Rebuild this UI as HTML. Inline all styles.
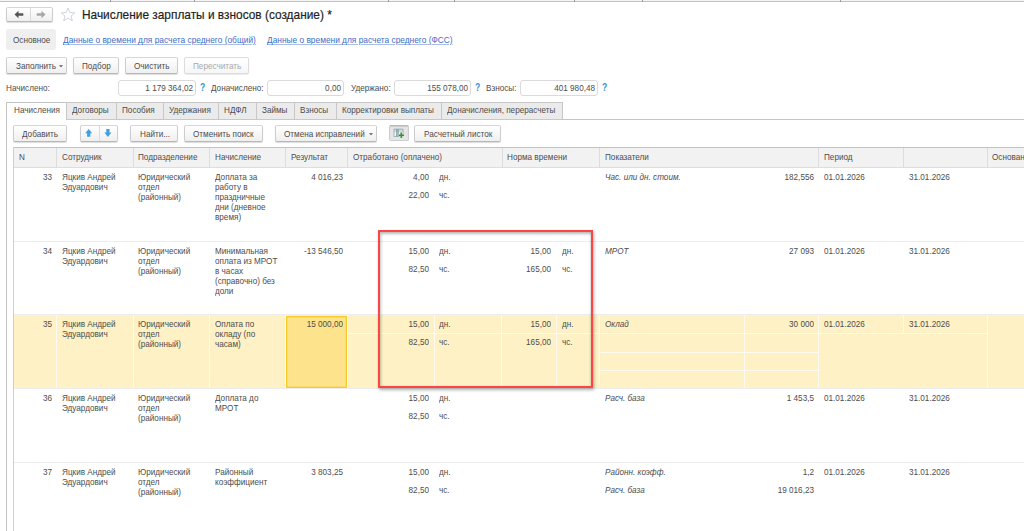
<!DOCTYPE html>
<html><head><meta charset="utf-8"><style>
html,body{margin:0;padding:0;}
body{width:1024px;height:531px;overflow:hidden;background:#fff;position:relative;font-family:"Liberation Sans",sans-serif;}
body>div,body>svg{position:absolute;}
.t{white-space:nowrap;line-height:12px;height:12px;}
</style></head><body>
<div style="left:0px;top:0px;width:1024px;height:1px;background:#f4f4f4"></div>
<div style="left:0px;top:1px;width:1024px;height:1px;background:#c2c2c2"></div>
<div style="left:110px;top:0px;width:1px;height:2px;background:#9a9a9a"></div>
<div style="left:194px;top:0px;width:1px;height:2px;background:#9a9a9a"></div>
<div style="left:388px;top:0px;width:1px;height:2px;background:#9a9a9a"></div>
<div style="left:454px;top:0px;width:1px;height:2px;background:#9a9a9a"></div>
<div style="left:574px;top:0px;width:1px;height:2px;background:#9a9a9a"></div>
<div style="left:642px;top:0px;width:1px;height:2px;background:#9a9a9a"></div>
<div style="left:840px;top:0px;width:1px;height:2px;background:#9a9a9a"></div>
<div style="left:6px;top:7px;width:47px;height:15px;border:1px solid #cdcdcd;border-top-color:#d6d6d6;border-bottom-color:#b8b8b8;border-radius:2px;background:linear-gradient(#ffffff,#efefef);box-shadow:0 1px 1px rgba(0,0,0,.14);box-sizing:border-box"></div>
<div style="left:30px;top:8px;width:1px;height:13px;background:#dadada"></div>
<svg style="left:14px;top:10px" width="10" height="9" viewBox="0 0 10 9"><path d="M0.5 4.5 L4.5 0.8 L4.5 3.3 L9.3 3.3 L9.3 5.7 L4.5 5.7 L4.5 8.2 Z" fill="#555"/></svg>
<svg style="left:36px;top:10px" width="10" height="9" viewBox="0 0 10 9"><path d="M9.5 4.5 L5.5 0.8 L5.5 3.3 L0.7 3.3 L0.7 5.7 L5.5 5.7 L5.5 8.2 Z" fill="#a6a6a6"/></svg>
<svg style="left:60px;top:7px" width="16" height="15" viewBox="0 0 16 15"><path d="M8 1 L9.9 5.6 L14.8 5.9 L11 9 L12.3 13.8 L8 11.1 L3.7 13.8 L5 9 L1.2 5.9 L6.1 5.6 Z" fill="none" stroke="#c9d0d6" stroke-width="0.9" stroke-linejoin="round"/></svg>
<div class="t" style="left:82.00px;top:9.06px;transform-origin:0 50%;transform:scaleX(0.928);font-size:12.8px;color:#1e1e1e;letter-spacing:0px;-webkit-text-stroke:0.2px #1e1e1e">Начисление зарплаты и взносов (создание) *</div>
<div style="left:6px;top:29px;width:50px;height:21px;background:#efefef;border-radius:3px"></div>
<div class="t" style="left:13.00px;top:34.47px;transform-origin:0 50%;transform:scaleX(0.85);font-size:9.6px;color:#4d4d4d;letter-spacing:0px;">Основное</div>
<div class="t" style="left:63.00px;top:34.47px;transform-origin:0 50%;transform:scaleX(0.87);font-size:9.6px;color:#3d6ec9;letter-spacing:0px;text-decoration:underline;text-decoration-color:#a9bde6">Данные о времени для расчета среднего (общий)</div>
<div class="t" style="left:267.00px;top:34.47px;transform-origin:0 50%;transform:scaleX(0.87);font-size:9.6px;color:#3d6ec9;letter-spacing:0px;text-decoration:underline;text-decoration-color:#a9bde6">Данные о времени для расчета среднего (ФСС)</div>
<div style="left:6px;top:57px;width:61px;height:17px;border:1px solid #cdcdcd;border-top-color:#d6d6d6;border-bottom-color:#b8b8b8;border-radius:2px;background:linear-gradient(#ffffff,#efefef);box-shadow:0 1px 1px rgba(0,0,0,.14);box-sizing:border-box"></div>
<div class="t" style="left:16.00px;top:60.17px;transform-origin:0 50%;transform:scaleX(0.85);font-size:9.6px;color:#4d4d4d;letter-spacing:0px;">Заполнить</div>
<svg style="left:59px;top:65.0px" width="4" height="3" viewBox="0 0 4 3"><path d="M0 0.3 L4 0.3 L2 2.3Z" fill="#555"/></svg>
<div style="left:73px;top:57px;width:46px;height:17px;border:1px solid #cdcdcd;border-top-color:#d6d6d6;border-bottom-color:#b8b8b8;border-radius:2px;background:linear-gradient(#ffffff,#efefef);box-shadow:0 1px 1px rgba(0,0,0,.14);box-sizing:border-box"></div>
<div class="t" style="left:82.00px;top:60.17px;transform-origin:0 50%;transform:scaleX(0.85);font-size:9.6px;color:#4d4d4d;letter-spacing:0px;">Подбор</div>
<div style="left:125px;top:57px;width:53px;height:17px;border:1px solid #cdcdcd;border-top-color:#d6d6d6;border-bottom-color:#b8b8b8;border-radius:2px;background:linear-gradient(#ffffff,#efefef);box-shadow:0 1px 1px rgba(0,0,0,.14);box-sizing:border-box"></div>
<div class="t" style="left:134.00px;top:60.17px;transform-origin:0 50%;transform:scaleX(0.85);font-size:9.6px;color:#4d4d4d;letter-spacing:0px;">Очистить</div>
<div style="left:184px;top:57px;width:65px;height:17px;border:1px solid #dcdcdc;border-radius:2px;background:linear-gradient(#ffffff,#f6f6f6);box-shadow:0 1px 1px rgba(0,0,0,.08);box-sizing:border-box"></div>
<div class="t" style="left:192.70px;top:60.17px;transform-origin:0 50%;transform:scaleX(0.85);font-size:9.6px;color:#a9a9a9;letter-spacing:0px;">Пересчитать</div>
<div class="t" style="left:6.00px;top:81.97px;transform-origin:0 50%;transform:scaleX(0.85);font-size:9.6px;color:#4d4d4d;letter-spacing:0px;">Начислено:</div>
<div style="left:118px;top:80px;width:78px;height:16px;border:1px solid #dadada;border-radius:3px;background:#fff;box-sizing:border-box"></div>
<div class="t" style="left:-7.00px;top:81.97px;width:200px;text-align:right;transform-origin:100% 50%;transform:scaleX(0.85);font-size:9.6px;color:#4d4d4d;letter-spacing:0px;">1 179 364,02</div>
<div class="t" style="left:199.50px;top:81.83px;transform-origin:0 50%;transform:scaleX(0.85);font-size:10px;color:#3990d6;letter-spacing:0px;font-weight:bold">?</div>
<div class="t" style="left:211.00px;top:81.97px;transform-origin:0 50%;transform:scaleX(0.85);font-size:9.6px;color:#4d4d4d;letter-spacing:0px;">Доначислено:</div>
<div style="left:267px;top:80px;width:77px;height:16px;border:1px solid #dadada;border-radius:3px;background:#fff;box-sizing:border-box"></div>
<div class="t" style="left:141.20px;top:81.97px;width:200px;text-align:right;transform-origin:100% 50%;transform:scaleX(0.85);font-size:9.6px;color:#4d4d4d;letter-spacing:0px;">0,00</div>
<div class="t" style="left:350.50px;top:81.97px;transform-origin:0 50%;transform:scaleX(0.85);font-size:9.6px;color:#4d4d4d;letter-spacing:0px;">Удержано:</div>
<div style="left:394px;top:80px;width:77px;height:16px;border:1px solid #dadada;border-radius:3px;background:#fff;box-sizing:border-box"></div>
<div class="t" style="left:268.20px;top:81.97px;width:200px;text-align:right;transform-origin:100% 50%;transform:scaleX(0.85);font-size:9.6px;color:#4d4d4d;letter-spacing:0px;">155 078,00</div>
<div class="t" style="left:475.40px;top:81.83px;transform-origin:0 50%;transform:scaleX(0.85);font-size:10px;color:#3990d6;letter-spacing:0px;font-weight:bold">?</div>
<div class="t" style="left:486.30px;top:81.97px;transform-origin:0 50%;transform:scaleX(0.85);font-size:9.6px;color:#4d4d4d;letter-spacing:0px;">Взносы:</div>
<div style="left:520px;top:80px;width:78px;height:16px;border:1px solid #dadada;border-radius:3px;background:#fff;box-sizing:border-box"></div>
<div class="t" style="left:395.20px;top:81.97px;width:200px;text-align:right;transform-origin:100% 50%;transform:scaleX(0.85);font-size:9.6px;color:#4d4d4d;letter-spacing:0px;">401 980,48</div>
<div class="t" style="left:601.70px;top:81.83px;transform-origin:0 50%;transform:scaleX(0.85);font-size:10px;color:#3990d6;letter-spacing:0px;font-weight:bold">?</div>
<div style="left:6px;top:119px;width:1018px;height:1px;background:#c4c4c4"></div>
<div style="left:6px;top:102px;width:61px;height:18px;background:#fff;border:1px solid #c4c4c4;border-bottom:none;box-sizing:border-box"></div>
<div class="t" style="left:13.50px;top:104.17px;transform-origin:0 50%;transform:scaleX(0.85);font-size:9.6px;color:#4d4d4d;letter-spacing:0px;">Начисления</div>
<div style="left:66px;top:102px;width:51px;height:18px;background:#ebebeb;border:1px solid #c8c8c8;box-sizing:border-box"></div>
<div class="t" style="left:72.00px;top:104.17px;transform-origin:0 50%;transform:scaleX(0.85);font-size:9.6px;color:#4d4d4d;letter-spacing:0px;">Договоры</div>
<div style="left:116px;top:102px;width:48px;height:18px;background:#ebebeb;border:1px solid #c8c8c8;box-sizing:border-box"></div>
<div class="t" style="left:122.00px;top:104.17px;transform-origin:0 50%;transform:scaleX(0.85);font-size:9.6px;color:#4d4d4d;letter-spacing:0px;">Пособия</div>
<div style="left:163px;top:102px;width:56px;height:18px;background:#ebebeb;border:1px solid #c8c8c8;box-sizing:border-box"></div>
<div class="t" style="left:169.00px;top:104.17px;transform-origin:0 50%;transform:scaleX(0.85);font-size:9.6px;color:#4d4d4d;letter-spacing:0px;">Удержания</div>
<div style="left:218px;top:102px;width:39px;height:18px;background:#ebebeb;border:1px solid #c8c8c8;box-sizing:border-box"></div>
<div class="t" style="left:224.00px;top:104.17px;transform-origin:0 50%;transform:scaleX(0.85);font-size:9.6px;color:#4d4d4d;letter-spacing:0px;">НДФЛ</div>
<div style="left:256px;top:102px;width:39px;height:18px;background:#ebebeb;border:1px solid #c8c8c8;box-sizing:border-box"></div>
<div class="t" style="left:262.00px;top:104.17px;transform-origin:0 50%;transform:scaleX(0.85);font-size:9.6px;color:#4d4d4d;letter-spacing:0px;">Займы</div>
<div style="left:294px;top:102px;width:43px;height:18px;background:#ebebeb;border:1px solid #c8c8c8;box-sizing:border-box"></div>
<div class="t" style="left:300.00px;top:104.17px;transform-origin:0 50%;transform:scaleX(0.85);font-size:9.6px;color:#4d4d4d;letter-spacing:0px;">Взносы</div>
<div style="left:336px;top:102px;width:106px;height:18px;background:#ebebeb;border:1px solid #c8c8c8;box-sizing:border-box"></div>
<div class="t" style="left:342.00px;top:104.17px;transform-origin:0 50%;transform:scaleX(0.85);font-size:9.6px;color:#4d4d4d;letter-spacing:0px;">Корректировки выплаты</div>
<div style="left:441px;top:102px;width:122px;height:18px;background:#ebebeb;border:1px solid #c8c8c8;box-sizing:border-box"></div>
<div class="t" style="left:447.00px;top:104.17px;transform-origin:0 50%;transform:scaleX(0.85);font-size:9.6px;color:#4d4d4d;letter-spacing:0px;">Доначисления, перерасчеты</div>
<div style="left:6px;top:119px;width:1px;height:412px;background:#c4c4c4"></div>
<div style="left:13px;top:125px;width:54px;height:17px;border:1px solid #cdcdcd;border-top-color:#d6d6d6;border-bottom-color:#b8b8b8;border-radius:2px;background:linear-gradient(#ffffff,#efefef);box-shadow:0 1px 1px rgba(0,0,0,.14);box-sizing:border-box"></div>
<div class="t" style="left:22.00px;top:128.17px;transform-origin:0 50%;transform:scaleX(0.85);font-size:9.6px;color:#4d4d4d;letter-spacing:0px;">Добавить</div>
<div style="left:80px;top:125px;width:38px;height:17px;border:1px solid #cdcdcd;border-top-color:#d6d6d6;border-bottom-color:#b8b8b8;border-radius:2px;background:linear-gradient(#ffffff,#efefef);box-shadow:0 1px 1px rgba(0,0,0,.14);box-sizing:border-box"></div>
<div style="left:99px;top:126px;width:1px;height:15px;background:#dadada"></div>
<svg style="left:85px;top:129px" width="8" height="8" viewBox="0 0 8 8"><path d="M3.7 0.1 L7.2 4.3 L5.3 4.3 L5.3 7.7 L2.1 7.7 L2.1 4.3 L0.2 4.3 Z" fill="#3fa0e4"/></svg>
<svg style="left:103.5px;top:129px" width="8" height="8" viewBox="0 0 8 8"><path d="M3.9 7.9 L7.4 3.6 L5.5 3.6 L5.5 0.1 L2.3 0.1 L2.3 3.6 L0.4 3.6 Z" fill="#3fa0e4"/></svg>
<div style="left:130px;top:125px;width:48px;height:17px;border:1px solid #cdcdcd;border-top-color:#d6d6d6;border-bottom-color:#b8b8b8;border-radius:2px;background:linear-gradient(#ffffff,#efefef);box-shadow:0 1px 1px rgba(0,0,0,.14);box-sizing:border-box"></div>
<div class="t" style="left:140.00px;top:128.17px;transform-origin:0 50%;transform:scaleX(0.85);font-size:9.6px;color:#4d4d4d;letter-spacing:0px;">Найти...</div>
<div style="left:184px;top:125px;width:79px;height:17px;border:1px solid #cdcdcd;border-top-color:#d6d6d6;border-bottom-color:#b8b8b8;border-radius:2px;background:linear-gradient(#ffffff,#efefef);box-shadow:0 1px 1px rgba(0,0,0,.14);box-sizing:border-box"></div>
<div class="t" style="left:193.00px;top:128.17px;transform-origin:0 50%;transform:scaleX(0.85);font-size:9.6px;color:#4d4d4d;letter-spacing:0px;">Отменить поиск</div>
<div style="left:275px;top:125px;width:102px;height:17px;border:1px solid #cdcdcd;border-top-color:#d6d6d6;border-bottom-color:#b8b8b8;border-radius:2px;background:linear-gradient(#ffffff,#efefef);box-shadow:0 1px 1px rgba(0,0,0,.14);box-sizing:border-box"></div>
<div class="t" style="left:284.00px;top:128.17px;transform-origin:0 50%;transform:scaleX(0.85);font-size:9.6px;color:#4d4d4d;letter-spacing:0px;">Отмена исправлений</div>
<svg style="left:369px;top:133.0px" width="4" height="3" viewBox="0 0 4 3"><path d="M0 0.3 L4 0.3 L2 2.3Z" fill="#555"/></svg>
<div style="left:389px;top:125px;width:20px;height:16px;border:1px solid #cdcdcd;border-top-color:#b9b9b9;border-radius:2px;background:#e6e6e6;box-shadow:inset 0 1px 1px rgba(0,0,0,.12);box-sizing:border-box"></div>
<svg style="left:393px;top:128px" width="13" height="12" viewBox="0 0 13 12"><rect x="0.6" y="0.7" width="9.8" height="8.3" fill="#8ea4b8"/><rect x="1.4" y="1.7" width="1.6" height="0.9" fill="#fff"/><rect x="3.7" y="1.7" width="1.5" height="0.9" fill="#8fd36a"/><rect x="5.9" y="1.7" width="3.8" height="0.9" fill="#fff"/><rect x="1.4" y="3.4" width="1.6" height="4.9" fill="#f4f7fa"/><rect x="3.7" y="3.4" width="1.5" height="4.9" fill="#8fd36a"/><rect x="5.9" y="3.4" width="3.8" height="4.9" fill="#f4f7fa"/><path d="M8.3 4.3 V10.3 M5.3 7.3 H11.3" stroke="#e6e6e6" stroke-width="2.6"/><path d="M8.3 4.6 V10 M5.6 7.3 H11" stroke="#2b962b" stroke-width="1.6"/></svg>
<div style="left:414px;top:125px;width:87px;height:17px;border:1px solid #cdcdcd;border-top-color:#d6d6d6;border-bottom-color:#b8b8b8;border-radius:2px;background:linear-gradient(#ffffff,#efefef);box-shadow:0 1px 1px rgba(0,0,0,.14);box-sizing:border-box"></div>
<div class="t" style="left:423.50px;top:128.17px;transform-origin:0 50%;transform:scaleX(0.85);font-size:9.6px;color:#4d4d4d;letter-spacing:0px;">Расчетный листок</div>
<div style="left:13px;top:147px;width:1011px;height:21px;background:#f2f2f2;border-top:1px solid #c2c2c2;border-bottom:1px solid #dedede;box-sizing:border-box"></div>
<div style="left:13px;top:147px;width:1px;height:384px;background:#cfcfcf"></div>
<div style="left:56px;top:148px;width:1px;height:19px;background:#dcdcdc"></div>
<div style="left:133px;top:148px;width:1px;height:19px;background:#dcdcdc"></div>
<div style="left:209px;top:148px;width:1px;height:19px;background:#dcdcdc"></div>
<div style="left:285px;top:148px;width:1px;height:19px;background:#dcdcdc"></div>
<div style="left:347px;top:148px;width:1px;height:19px;background:#dcdcdc"></div>
<div style="left:502px;top:148px;width:1px;height:19px;background:#dcdcdc"></div>
<div style="left:599px;top:148px;width:1px;height:19px;background:#dcdcdc"></div>
<div style="left:818px;top:148px;width:1px;height:19px;background:#dcdcdc"></div>
<div style="left:903px;top:148px;width:1px;height:19px;background:#dcdcdc"></div>
<div style="left:987px;top:148px;width:1px;height:19px;background:#dcdcdc"></div>
<div class="t" style="left:18.50px;top:150.97px;transform-origin:0 50%;transform:scaleX(0.85);font-size:9.6px;color:#4d4d4d;letter-spacing:0px;">N</div>
<div class="t" style="left:61.50px;top:150.97px;transform-origin:0 50%;transform:scaleX(0.85);font-size:9.6px;color:#4d4d4d;letter-spacing:0px;">Сотрудник</div>
<div class="t" style="left:138.00px;top:150.97px;transform-origin:0 50%;transform:scaleX(0.85);font-size:9.6px;color:#4d4d4d;letter-spacing:0px;">Подразделение</div>
<div class="t" style="left:214.50px;top:150.97px;transform-origin:0 50%;transform:scaleX(0.85);font-size:9.6px;color:#4d4d4d;letter-spacing:0px;">Начисление</div>
<div class="t" style="left:291.00px;top:150.97px;transform-origin:0 50%;transform:scaleX(0.85);font-size:9.6px;color:#4d4d4d;letter-spacing:0px;">Результат</div>
<div class="t" style="left:352.50px;top:150.97px;transform-origin:0 50%;transform:scaleX(0.85);font-size:9.6px;color:#4d4d4d;letter-spacing:0px;">Отработано (оплачено)</div>
<div class="t" style="left:507.00px;top:150.97px;transform-origin:0 50%;transform:scaleX(0.85);font-size:9.6px;color:#4d4d4d;letter-spacing:0px;">Норма времени</div>
<div class="t" style="left:604.50px;top:150.97px;transform-origin:0 50%;transform:scaleX(0.85);font-size:9.6px;color:#4d4d4d;letter-spacing:0px;">Показатели</div>
<div class="t" style="left:823.50px;top:150.97px;transform-origin:0 50%;transform:scaleX(0.85);font-size:9.6px;color:#4d4d4d;letter-spacing:0px;">Период</div>
<div class="t" style="left:992.00px;top:150.97px;transform-origin:0 50%;transform:scaleX(0.85);font-size:9.6px;color:#4d4d4d;letter-spacing:0px;">Основание</div>
<div style="left:14px;top:315px;width:1010px;height:73px;background:#fdf1c5"></div>
<div style="left:56px;top:315px;width:1px;height:73px;background:#fffaf0"></div>
<div style="left:133px;top:315px;width:1px;height:73px;background:#fffaf0"></div>
<div style="left:209px;top:315px;width:1px;height:73px;background:#fffaf0"></div>
<div style="left:285px;top:315px;width:1px;height:73px;background:#fffaf0"></div>
<div style="left:347px;top:315px;width:1px;height:73px;background:#fffaf0"></div>
<div style="left:434px;top:315px;width:1px;height:73px;background:#fffaf0"></div>
<div style="left:501px;top:315px;width:1px;height:73px;background:#fffaf0"></div>
<div style="left:556px;top:315px;width:1px;height:73px;background:#fffaf0"></div>
<div style="left:599px;top:315px;width:1px;height:73px;background:#fffaf0"></div>
<div style="left:744px;top:315px;width:1px;height:73px;background:#fffaf0"></div>
<div style="left:818px;top:315px;width:1px;height:73px;background:#fffaf0"></div>
<div style="left:987px;top:315px;width:1px;height:73px;background:#fffaf0"></div>
<div style="left:903px;top:315px;width:1px;height:18px;background:#fffaf0"></div>
<div style="left:347px;top:333px;width:640px;height:1px;background:#fffaf0"></div>
<div style="left:599px;top:352px;width:219px;height:1px;background:#fffaf0"></div>
<div style="left:599px;top:370px;width:219px;height:1px;background:#fffaf0"></div>
<div style="left:286px;top:316px;width:61px;height:72px;background:#fde38b;border:1px solid #f6ca28;box-shadow:inset 0 0 0 1px #fbdb6c;box-sizing:border-box"></div>
<div style="left:14px;top:241px;width:1010px;height:1px;background:#ededed"></div>
<div style="left:14px;top:314px;width:1010px;height:1px;background:#ededed"></div>
<div style="left:14px;top:388px;width:1010px;height:1px;background:#ededed"></div>
<div style="left:14px;top:462px;width:1010px;height:1px;background:#ededed"></div>
<div class="t" style="left:11.50px;top:171.17px;width:40px;text-align:right;transform-origin:100% 50%;transform:scaleX(0.85);font-size:9.6px;color:#4d4d4d;letter-spacing:0px;">33</div>
<div class="t" style="left:61.50px;top:171.17px;transform-origin:0 50%;transform:scaleX(0.85);font-size:9.6px;color:#4d4d4d;letter-spacing:0px;">Яцкив Андрей</div>
<div class="t" style="left:61.50px;top:181.17px;transform-origin:0 50%;transform:scaleX(0.85);font-size:9.6px;color:#4d4d4d;letter-spacing:0px;">Эдуардович</div>
<div class="t" style="left:138.00px;top:171.17px;transform-origin:0 50%;transform:scaleX(0.85);font-size:9.6px;color:#4d4d4d;letter-spacing:0px;">Юридический</div>
<div class="t" style="left:138.00px;top:181.17px;transform-origin:0 50%;transform:scaleX(0.85);font-size:9.6px;color:#4d4d4d;letter-spacing:0px;">отдел</div>
<div class="t" style="left:138.00px;top:191.17px;transform-origin:0 50%;transform:scaleX(0.85);font-size:9.6px;color:#4d4d4d;letter-spacing:0px;">(районный)</div>
<div class="t" style="left:214.50px;top:171.17px;transform-origin:0 50%;transform:scaleX(0.85);font-size:9.6px;color:#4d4d4d;letter-spacing:0px;">Доплата за</div>
<div class="t" style="left:214.50px;top:181.17px;transform-origin:0 50%;transform:scaleX(0.85);font-size:9.6px;color:#4d4d4d;letter-spacing:0px;">работу в</div>
<div class="t" style="left:214.50px;top:191.17px;transform-origin:0 50%;transform:scaleX(0.85);font-size:9.6px;color:#4d4d4d;letter-spacing:0px;">праздничные</div>
<div class="t" style="left:214.50px;top:201.17px;transform-origin:0 50%;transform:scaleX(0.85);font-size:9.6px;color:#4d4d4d;letter-spacing:0px;">дни (дневное</div>
<div class="t" style="left:214.50px;top:211.17px;transform-origin:0 50%;transform:scaleX(0.85);font-size:9.6px;color:#4d4d4d;letter-spacing:0px;">время)</div>
<div class="t" style="left:282.50px;top:171.17px;width:60px;text-align:right;transform-origin:100% 50%;transform:scaleX(0.85);font-size:9.6px;color:#4d4d4d;letter-spacing:0px;">4 016,23</div>
<div class="t" style="left:369.00px;top:171.17px;width:60px;text-align:right;transform-origin:100% 50%;transform:scaleX(0.85);font-size:9.6px;color:#4d4d4d;letter-spacing:0px;">4,00</div>
<div class="t" style="left:439.00px;top:171.17px;transform-origin:0 50%;transform:scaleX(0.85);font-size:9.6px;color:#4d4d4d;letter-spacing:0px;">дн.</div>
<div class="t" style="left:369.00px;top:189.17px;width:60px;text-align:right;transform-origin:100% 50%;transform:scaleX(0.85);font-size:9.6px;color:#4d4d4d;letter-spacing:0px;">22,00</div>
<div class="t" style="left:439.00px;top:189.17px;transform-origin:0 50%;transform:scaleX(0.85);font-size:9.6px;color:#4d4d4d;letter-spacing:0px;">чс.</div>
<div class="t" style="left:605.00px;top:171.17px;transform-origin:0 50%;transform:scaleX(0.85);font-size:9.6px;color:#4d4d4d;letter-spacing:0px;font-style:italic">Час. или дн. стоим.</div>
<div class="t" style="left:753.50px;top:171.17px;width:60px;text-align:right;transform-origin:100% 50%;transform:scaleX(0.85);font-size:9.6px;color:#4d4d4d;letter-spacing:0px;">182,556</div>
<div class="t" style="left:824.00px;top:171.17px;transform-origin:0 50%;transform:scaleX(0.85);font-size:9.6px;color:#4d4d4d;letter-spacing:0px;">01.01.2026</div>
<div class="t" style="left:909.00px;top:171.17px;transform-origin:0 50%;transform:scaleX(0.85);font-size:9.6px;color:#4d4d4d;letter-spacing:0px;">31.01.2026</div>
<div class="t" style="left:11.50px;top:245.17px;width:40px;text-align:right;transform-origin:100% 50%;transform:scaleX(0.85);font-size:9.6px;color:#4d4d4d;letter-spacing:0px;">34</div>
<div class="t" style="left:61.50px;top:245.17px;transform-origin:0 50%;transform:scaleX(0.85);font-size:9.6px;color:#4d4d4d;letter-spacing:0px;">Яцкив Андрей</div>
<div class="t" style="left:61.50px;top:255.17px;transform-origin:0 50%;transform:scaleX(0.85);font-size:9.6px;color:#4d4d4d;letter-spacing:0px;">Эдуардович</div>
<div class="t" style="left:138.00px;top:245.17px;transform-origin:0 50%;transform:scaleX(0.85);font-size:9.6px;color:#4d4d4d;letter-spacing:0px;">Юридический</div>
<div class="t" style="left:138.00px;top:255.17px;transform-origin:0 50%;transform:scaleX(0.85);font-size:9.6px;color:#4d4d4d;letter-spacing:0px;">отдел</div>
<div class="t" style="left:138.00px;top:265.17px;transform-origin:0 50%;transform:scaleX(0.85);font-size:9.6px;color:#4d4d4d;letter-spacing:0px;">(районный)</div>
<div class="t" style="left:214.50px;top:245.17px;transform-origin:0 50%;transform:scaleX(0.85);font-size:9.6px;color:#4d4d4d;letter-spacing:0px;">Минимальная</div>
<div class="t" style="left:214.50px;top:255.17px;transform-origin:0 50%;transform:scaleX(0.85);font-size:9.6px;color:#4d4d4d;letter-spacing:0px;">оплата из МРОТ</div>
<div class="t" style="left:214.50px;top:265.17px;transform-origin:0 50%;transform:scaleX(0.85);font-size:9.6px;color:#4d4d4d;letter-spacing:0px;">в часах</div>
<div class="t" style="left:214.50px;top:275.17px;transform-origin:0 50%;transform:scaleX(0.85);font-size:9.6px;color:#4d4d4d;letter-spacing:0px;">(справочно) без</div>
<div class="t" style="left:214.50px;top:285.17px;transform-origin:0 50%;transform:scaleX(0.85);font-size:9.6px;color:#4d4d4d;letter-spacing:0px;">доли</div>
<div class="t" style="left:282.50px;top:245.17px;width:60px;text-align:right;transform-origin:100% 50%;transform:scaleX(0.85);font-size:9.6px;color:#4d4d4d;letter-spacing:0px;">-13 546,50</div>
<div class="t" style="left:369.00px;top:245.17px;width:60px;text-align:right;transform-origin:100% 50%;transform:scaleX(0.85);font-size:9.6px;color:#4d4d4d;letter-spacing:0px;">15,00</div>
<div class="t" style="left:439.00px;top:245.17px;transform-origin:0 50%;transform:scaleX(0.85);font-size:9.6px;color:#4d4d4d;letter-spacing:0px;">дн.</div>
<div class="t" style="left:369.00px;top:263.17px;width:60px;text-align:right;transform-origin:100% 50%;transform:scaleX(0.85);font-size:9.6px;color:#4d4d4d;letter-spacing:0px;">82,50</div>
<div class="t" style="left:439.00px;top:263.17px;transform-origin:0 50%;transform:scaleX(0.85);font-size:9.6px;color:#4d4d4d;letter-spacing:0px;">чс.</div>
<div class="t" style="left:501.00px;top:245.17px;width:50px;text-align:right;transform-origin:100% 50%;transform:scaleX(0.85);font-size:9.6px;color:#4d4d4d;letter-spacing:0px;">15,00</div>
<div class="t" style="left:561.50px;top:245.17px;transform-origin:0 50%;transform:scaleX(0.85);font-size:9.6px;color:#4d4d4d;letter-spacing:0px;">дн.</div>
<div class="t" style="left:501.00px;top:263.17px;width:50px;text-align:right;transform-origin:100% 50%;transform:scaleX(0.85);font-size:9.6px;color:#4d4d4d;letter-spacing:0px;">165,00</div>
<div class="t" style="left:561.50px;top:263.17px;transform-origin:0 50%;transform:scaleX(0.85);font-size:9.6px;color:#4d4d4d;letter-spacing:0px;">чс.</div>
<div class="t" style="left:605.00px;top:245.17px;transform-origin:0 50%;transform:scaleX(0.85);font-size:9.6px;color:#4d4d4d;letter-spacing:0px;font-style:italic">МРОТ</div>
<div class="t" style="left:753.50px;top:245.17px;width:60px;text-align:right;transform-origin:100% 50%;transform:scaleX(0.85);font-size:9.6px;color:#4d4d4d;letter-spacing:0px;">27 093</div>
<div class="t" style="left:824.00px;top:245.17px;transform-origin:0 50%;transform:scaleX(0.85);font-size:9.6px;color:#4d4d4d;letter-spacing:0px;">01.01.2026</div>
<div class="t" style="left:909.00px;top:245.17px;transform-origin:0 50%;transform:scaleX(0.85);font-size:9.6px;color:#4d4d4d;letter-spacing:0px;">31.01.2026</div>
<div class="t" style="left:11.50px;top:318.37px;width:40px;text-align:right;transform-origin:100% 50%;transform:scaleX(0.85);font-size:9.6px;color:#4d4d4d;letter-spacing:0px;">35</div>
<div class="t" style="left:61.50px;top:318.37px;transform-origin:0 50%;transform:scaleX(0.85);font-size:9.6px;color:#4d4d4d;letter-spacing:0px;">Яцкив Андрей</div>
<div class="t" style="left:61.50px;top:328.37px;transform-origin:0 50%;transform:scaleX(0.85);font-size:9.6px;color:#4d4d4d;letter-spacing:0px;">Эдуардович</div>
<div class="t" style="left:138.00px;top:318.37px;transform-origin:0 50%;transform:scaleX(0.85);font-size:9.6px;color:#4d4d4d;letter-spacing:0px;">Юридический</div>
<div class="t" style="left:138.00px;top:328.37px;transform-origin:0 50%;transform:scaleX(0.85);font-size:9.6px;color:#4d4d4d;letter-spacing:0px;">отдел</div>
<div class="t" style="left:138.00px;top:338.37px;transform-origin:0 50%;transform:scaleX(0.85);font-size:9.6px;color:#4d4d4d;letter-spacing:0px;">(районный)</div>
<div class="t" style="left:214.50px;top:318.37px;transform-origin:0 50%;transform:scaleX(0.85);font-size:9.6px;color:#4d4d4d;letter-spacing:0px;">Оплата по</div>
<div class="t" style="left:214.50px;top:328.37px;transform-origin:0 50%;transform:scaleX(0.85);font-size:9.6px;color:#4d4d4d;letter-spacing:0px;">окладу (по</div>
<div class="t" style="left:214.50px;top:338.37px;transform-origin:0 50%;transform:scaleX(0.85);font-size:9.6px;color:#4d4d4d;letter-spacing:0px;">часам)</div>
<div class="t" style="left:282.50px;top:318.37px;width:60px;text-align:right;transform-origin:100% 50%;transform:scaleX(0.85);font-size:9.6px;color:#4d4d4d;letter-spacing:0px;">15 000,00</div>
<div class="t" style="left:369.00px;top:318.37px;width:60px;text-align:right;transform-origin:100% 50%;transform:scaleX(0.85);font-size:9.6px;color:#4d4d4d;letter-spacing:0px;">15,00</div>
<div class="t" style="left:439.00px;top:318.37px;transform-origin:0 50%;transform:scaleX(0.85);font-size:9.6px;color:#4d4d4d;letter-spacing:0px;">дн.</div>
<div class="t" style="left:369.00px;top:336.37px;width:60px;text-align:right;transform-origin:100% 50%;transform:scaleX(0.85);font-size:9.6px;color:#4d4d4d;letter-spacing:0px;">82,50</div>
<div class="t" style="left:439.00px;top:336.37px;transform-origin:0 50%;transform:scaleX(0.85);font-size:9.6px;color:#4d4d4d;letter-spacing:0px;">чс.</div>
<div class="t" style="left:501.00px;top:318.37px;width:50px;text-align:right;transform-origin:100% 50%;transform:scaleX(0.85);font-size:9.6px;color:#4d4d4d;letter-spacing:0px;">15,00</div>
<div class="t" style="left:561.50px;top:318.37px;transform-origin:0 50%;transform:scaleX(0.85);font-size:9.6px;color:#4d4d4d;letter-spacing:0px;">дн.</div>
<div class="t" style="left:501.00px;top:336.37px;width:50px;text-align:right;transform-origin:100% 50%;transform:scaleX(0.85);font-size:9.6px;color:#4d4d4d;letter-spacing:0px;">165,00</div>
<div class="t" style="left:561.50px;top:336.37px;transform-origin:0 50%;transform:scaleX(0.85);font-size:9.6px;color:#4d4d4d;letter-spacing:0px;">чс.</div>
<div class="t" style="left:605.00px;top:318.37px;transform-origin:0 50%;transform:scaleX(0.85);font-size:9.6px;color:#4d4d4d;letter-spacing:0px;font-style:italic">Оклад</div>
<div class="t" style="left:753.50px;top:318.37px;width:60px;text-align:right;transform-origin:100% 50%;transform:scaleX(0.85);font-size:9.6px;color:#4d4d4d;letter-spacing:0px;">30 000</div>
<div class="t" style="left:824.00px;top:318.37px;transform-origin:0 50%;transform:scaleX(0.85);font-size:9.6px;color:#4d4d4d;letter-spacing:0px;">01.01.2026</div>
<div class="t" style="left:909.00px;top:318.37px;transform-origin:0 50%;transform:scaleX(0.85);font-size:9.6px;color:#4d4d4d;letter-spacing:0px;">31.01.2026</div>
<div class="t" style="left:11.50px;top:392.17px;width:40px;text-align:right;transform-origin:100% 50%;transform:scaleX(0.85);font-size:9.6px;color:#4d4d4d;letter-spacing:0px;">36</div>
<div class="t" style="left:61.50px;top:392.17px;transform-origin:0 50%;transform:scaleX(0.85);font-size:9.6px;color:#4d4d4d;letter-spacing:0px;">Яцкив Андрей</div>
<div class="t" style="left:61.50px;top:402.17px;transform-origin:0 50%;transform:scaleX(0.85);font-size:9.6px;color:#4d4d4d;letter-spacing:0px;">Эдуардович</div>
<div class="t" style="left:138.00px;top:392.17px;transform-origin:0 50%;transform:scaleX(0.85);font-size:9.6px;color:#4d4d4d;letter-spacing:0px;">Юридический</div>
<div class="t" style="left:138.00px;top:402.17px;transform-origin:0 50%;transform:scaleX(0.85);font-size:9.6px;color:#4d4d4d;letter-spacing:0px;">отдел</div>
<div class="t" style="left:138.00px;top:412.17px;transform-origin:0 50%;transform:scaleX(0.85);font-size:9.6px;color:#4d4d4d;letter-spacing:0px;">(районный)</div>
<div class="t" style="left:214.50px;top:392.17px;transform-origin:0 50%;transform:scaleX(0.85);font-size:9.6px;color:#4d4d4d;letter-spacing:0px;">Доплата до</div>
<div class="t" style="left:214.50px;top:402.17px;transform-origin:0 50%;transform:scaleX(0.85);font-size:9.6px;color:#4d4d4d;letter-spacing:0px;">МРОТ</div>
<div class="t" style="left:369.00px;top:392.17px;width:60px;text-align:right;transform-origin:100% 50%;transform:scaleX(0.85);font-size:9.6px;color:#4d4d4d;letter-spacing:0px;">15,00</div>
<div class="t" style="left:439.00px;top:392.17px;transform-origin:0 50%;transform:scaleX(0.85);font-size:9.6px;color:#4d4d4d;letter-spacing:0px;">дн.</div>
<div class="t" style="left:369.00px;top:410.17px;width:60px;text-align:right;transform-origin:100% 50%;transform:scaleX(0.85);font-size:9.6px;color:#4d4d4d;letter-spacing:0px;">82,50</div>
<div class="t" style="left:439.00px;top:410.17px;transform-origin:0 50%;transform:scaleX(0.85);font-size:9.6px;color:#4d4d4d;letter-spacing:0px;">чс.</div>
<div class="t" style="left:605.00px;top:392.17px;transform-origin:0 50%;transform:scaleX(0.85);font-size:9.6px;color:#4d4d4d;letter-spacing:0px;font-style:italic">Расч. база</div>
<div class="t" style="left:753.50px;top:392.17px;width:60px;text-align:right;transform-origin:100% 50%;transform:scaleX(0.85);font-size:9.6px;color:#4d4d4d;letter-spacing:0px;">1 453,5</div>
<div class="t" style="left:824.00px;top:392.17px;transform-origin:0 50%;transform:scaleX(0.85);font-size:9.6px;color:#4d4d4d;letter-spacing:0px;">01.01.2026</div>
<div class="t" style="left:909.00px;top:392.17px;transform-origin:0 50%;transform:scaleX(0.85);font-size:9.6px;color:#4d4d4d;letter-spacing:0px;">31.01.2026</div>
<div class="t" style="left:11.50px;top:466.17px;width:40px;text-align:right;transform-origin:100% 50%;transform:scaleX(0.85);font-size:9.6px;color:#4d4d4d;letter-spacing:0px;">37</div>
<div class="t" style="left:61.50px;top:466.17px;transform-origin:0 50%;transform:scaleX(0.85);font-size:9.6px;color:#4d4d4d;letter-spacing:0px;">Яцкив Андрей</div>
<div class="t" style="left:61.50px;top:476.17px;transform-origin:0 50%;transform:scaleX(0.85);font-size:9.6px;color:#4d4d4d;letter-spacing:0px;">Эдуардович</div>
<div class="t" style="left:138.00px;top:466.17px;transform-origin:0 50%;transform:scaleX(0.85);font-size:9.6px;color:#4d4d4d;letter-spacing:0px;">Юридический</div>
<div class="t" style="left:138.00px;top:476.17px;transform-origin:0 50%;transform:scaleX(0.85);font-size:9.6px;color:#4d4d4d;letter-spacing:0px;">отдел</div>
<div class="t" style="left:138.00px;top:486.17px;transform-origin:0 50%;transform:scaleX(0.85);font-size:9.6px;color:#4d4d4d;letter-spacing:0px;">(районный)</div>
<div class="t" style="left:214.50px;top:466.17px;transform-origin:0 50%;transform:scaleX(0.85);font-size:9.6px;color:#4d4d4d;letter-spacing:0px;">Районный</div>
<div class="t" style="left:214.50px;top:476.17px;transform-origin:0 50%;transform:scaleX(0.85);font-size:9.6px;color:#4d4d4d;letter-spacing:0px;">коэффициент</div>
<div class="t" style="left:282.50px;top:466.17px;width:60px;text-align:right;transform-origin:100% 50%;transform:scaleX(0.85);font-size:9.6px;color:#4d4d4d;letter-spacing:0px;">3 803,25</div>
<div class="t" style="left:369.00px;top:466.17px;width:60px;text-align:right;transform-origin:100% 50%;transform:scaleX(0.85);font-size:9.6px;color:#4d4d4d;letter-spacing:0px;">15,00</div>
<div class="t" style="left:439.00px;top:466.17px;transform-origin:0 50%;transform:scaleX(0.85);font-size:9.6px;color:#4d4d4d;letter-spacing:0px;">дн.</div>
<div class="t" style="left:369.00px;top:484.17px;width:60px;text-align:right;transform-origin:100% 50%;transform:scaleX(0.85);font-size:9.6px;color:#4d4d4d;letter-spacing:0px;">82,50</div>
<div class="t" style="left:439.00px;top:484.17px;transform-origin:0 50%;transform:scaleX(0.85);font-size:9.6px;color:#4d4d4d;letter-spacing:0px;">чс.</div>
<div class="t" style="left:605.00px;top:466.17px;transform-origin:0 50%;transform:scaleX(0.85);font-size:9.6px;color:#4d4d4d;letter-spacing:0px;font-style:italic">Районн. коэфф.</div>
<div class="t" style="left:753.50px;top:466.17px;width:60px;text-align:right;transform-origin:100% 50%;transform:scaleX(0.85);font-size:9.6px;color:#4d4d4d;letter-spacing:0px;">1,2</div>
<div class="t" style="left:605.00px;top:484.17px;transform-origin:0 50%;transform:scaleX(0.85);font-size:9.6px;color:#4d4d4d;letter-spacing:0px;font-style:italic">Расч. база</div>
<div class="t" style="left:753.50px;top:484.17px;width:60px;text-align:right;transform-origin:100% 50%;transform:scaleX(0.85);font-size:9.6px;color:#4d4d4d;letter-spacing:0px;">19 016,23</div>
<div class="t" style="left:824.00px;top:466.17px;transform-origin:0 50%;transform:scaleX(0.85);font-size:9.6px;color:#4d4d4d;letter-spacing:0px;">01.01.2026</div>
<div class="t" style="left:909.00px;top:466.17px;transform-origin:0 50%;transform:scaleX(0.85);font-size:9.6px;color:#4d4d4d;letter-spacing:0px;">31.01.2026</div>
<div style="left:378px;top:230px;width:215px;height:158px;border:2px solid #fb4646;box-sizing:border-box;box-shadow:1px 2px 3px rgba(0,0,0,.3), inset 1px 2px 3px rgba(0,0,0,.26), inset -1px 0 2px rgba(0,0,0,.1)"></div>
</body></html>
